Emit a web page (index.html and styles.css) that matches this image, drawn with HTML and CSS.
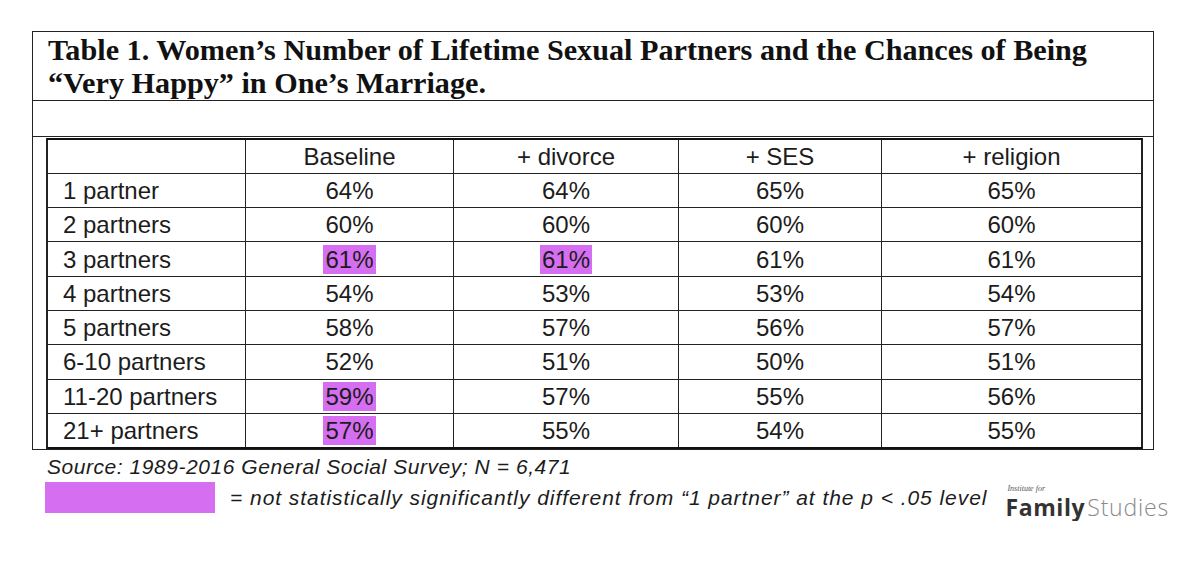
FILE: index.html
```html
<!DOCTYPE html>
<html>
<head>
<meta charset="utf-8">
<link rel="stylesheet" href="styles.css">
</head>
<body>
<div class="page">
  <div class="frame">
    <div class="title-row">
      <h1 class="title">Table 1. Women’s Number of Lifetime Sexual Partners and the Chances of Being<br>“Very Happy” in One’s Marriage.</h1>
    </div>
    <div class="empty-row"></div>
    <div class="body-row">
      <div class="side side-left"></div>
      <table class="data">
        <colgroup>
          <col class="c1"><col class="c2"><col class="c3"><col class="c4"><col class="c5">
        </colgroup>
        <thead>
          <tr><th></th><th>Baseline</th><th>+ divorce</th><th>+ SES</th><th>+ religion</th></tr>
        </thead>
        <tbody>
          <tr><td class="lbl">1 partner</td><td>64%</td><td>64%</td><td>65%</td><td>65%</td></tr>
          <tr><td class="lbl">2 partners</td><td>60%</td><td>60%</td><td>60%</td><td>60%</td></tr>
          <tr><td class="lbl">3 partners</td><td><span class="hl">61%</span></td><td><span class="hl">61%</span></td><td>61%</td><td>61%</td></tr>
          <tr><td class="lbl">4 partners</td><td>54%</td><td>53%</td><td>53%</td><td>54%</td></tr>
          <tr><td class="lbl">5 partners</td><td>58%</td><td>57%</td><td>56%</td><td>57%</td></tr>
          <tr><td class="lbl">6-10 partners</td><td>52%</td><td>51%</td><td>50%</td><td>51%</td></tr>
          <tr><td class="lbl">11-20 partners</td><td><span class="hl">59%</span></td><td>57%</td><td>55%</td><td>56%</td></tr>
          <tr><td class="lbl">21+ partners</td><td><span class="hl">57%</span></td><td>55%</td><td>54%</td><td>55%</td></tr>
        </tbody>
      </table>
      <div class="side side-right"></div>
    </div>
  </div>
  <div class="notes">
    <div class="source">Source: 1989-2016 General Social Survey; N = 6,471</div>
    <div class="legend">
      <span class="swatch"></span>
      <span class="legend-text">= not statistically significantly different from “1 partner” at the p &lt; .05 level</span>
      <div class="logo">
        <span class="logo-small">Institute for</span>
        <span class="logo-main"><span class="logo-family">Family</span><span class="logo-studies">Studies</span></span>
      </div>
    </div>
  </div>
</div>
</body>
</html>
```

FILE: styles.css
```css
html, body {
  margin: 0;
  padding: 0;
  background: #ffffff;
}

.page {
  padding: 31px 0 0 32px;
  width: 1168px;
}

.frame {
  width: 1120px;
  border: 1.5px solid #222;
}

.title-row {
  height: 68px;
  border-bottom: 1.5px solid #222;
  padding: 0 0 0 15px;
}

.title {
  margin: 0;
  padding-top: 2px;
  font-family: "Liberation Serif", "Times New Roman", serif;
  font-weight: bold;
  font-size: 30.2px;
  line-height: 33px;
  color: #111;
  white-space: nowrap;
}

.empty-row {
  height: 35px;
  border-bottom: 1.5px solid #222;
}

.body-row {
  display: flex;
  padding-top: 1px;
}

.side-left {
  width: 13px;
  flex: none;
  border-right: 1.5px solid #222;
}

.side-right {
  width: 11px;
  flex: none;
  border-left: 1.5px solid #222;
}

.data {
  border-collapse: collapse;
  table-layout: fixed;
  width: 1094px;
  font-family: "Liberation Sans", Arial, sans-serif;
  font-size: 24px;
  color: #1c1c1c;
  border-top: 2px solid #111;
  border-bottom: 2px solid #111;
}

.c1 { width: 198px; }
.c2 { width: 208px; }
.c3 { width: 225px; }
.c4 { width: 203px; }
.c5 { width: 260px; }

.data th,
.data td {
  border: 1.5px solid #222;
  height: 34.3px;
  padding: 0;
  text-align: center;
  font-weight: normal;
  vertical-align: middle;
  line-height: 27px;
  box-sizing: border-box;
}

.data thead th {
  border-top: 2px solid #111;
}

.data .lbl {
  text-align: left;
  padding-left: 15px;
}

.hl {
  background: #d56ef1;
  padding: 1px 2px;
}

.notes {
  width: 1168px;
}

.source {
  font-family: "Liberation Sans", Arial, sans-serif;
  font-style: italic;
  font-size: 21px;
  letter-spacing: 0.55px;
  color: #1c1c1c;
  padding: 5px 0 0 15px;
  line-height: 24px;
}

.legend {
  display: flex;
  align-items: flex-start;
  padding-top: 3px;
}

.swatch {
  width: 170px;
  height: 31px;
  margin-left: 13px;
  background: #d56ef1;
  flex: none;
}

.legend-text {
  font-family: "Liberation Sans", Arial, sans-serif;
  font-style: italic;
  font-size: 21px;
  letter-spacing: 0.95px;
  color: #1c1c1c;
  margin-left: 15px;
  padding-top: 4px;
  line-height: 24px;
  white-space: nowrap;
}

.logo {
  display: flex;
  flex-direction: column;
  margin-left: 18px;
  padding-top: 2px;
}

.logo-small {
  font-family: "Liberation Serif", serif;
  font-style: italic;
  font-size: 8px;
  color: #555;
  line-height: 9px;
  padding-left: 2px;
}

.logo-main {
  font-family: "Open Sans", "Liberation Sans", sans-serif;
  font-size: 23px;
  line-height: 28px;
  white-space: nowrap;
}

.logo-family {
  font-weight: bold;
  color: #333;
  letter-spacing: 0.6px;
}

.logo-studies {
  font-weight: 300;
  color: #8a8a8a;
  margin-left: 2px;
  letter-spacing: 0.8px;
}
```
